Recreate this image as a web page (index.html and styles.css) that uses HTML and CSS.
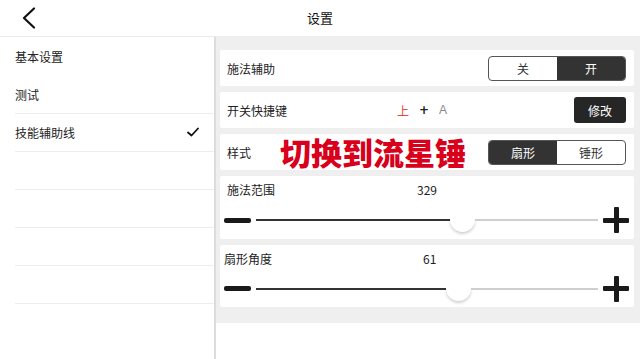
FILE: index.html
```html
<!DOCTYPE html>
<html lang="zh">
<head>
<meta charset="utf-8">
<link rel="stylesheet" href="styles.css">
</head>
<body>
<div class="app">
  <header class="topbar">
    <svg class="back" width="16" height="22" viewBox="0 0 16 22"><polyline points="13,1.5 3,11 13,20.5" fill="none" stroke="#111" stroke-width="2.2" stroke-linecap="round" stroke-linejoin="round"/></svg>
    <div class="title">设置</div>
  </header>
  <main class="main">
    <nav class="sidebar">
      <div class="item first">基本设置</div>
      <div class="item">测试</div>
      <div class="item">技能辅助线<span class="check"><svg width="12" height="10" viewBox="0 0 12 10"><polyline points="1,5.5 4.5,8.5 11,1.5" fill="none" stroke="#111" stroke-width="1.8" stroke-linecap="round" stroke-linejoin="round"/></svg></span></div>
      <div class="item"></div>
      <div class="item"></div>
      <div class="item"></div>
      <div class="item"></div>
    </nav>
    <section class="content">
      <div class="panel">
        <div class="card row">
          <span class="label">施法辅助</span>
          <div class="seg">
            <span class="seg-btn">关</span>
            <span class="seg-btn on">开</span>
          </div>
        </div>
        <div class="card row">
          <span class="label">开关快捷键</span>
          <span class="hotkey"><span class="hk-key">上</span><span class="hk-plus">+</span><span class="hk-a">A</span></span>
          <span class="btn">修改</span>
        </div>
        <div class="card row style-row">
          <span class="label">样式</span>
          <div class="seg">
            <span class="seg-btn on">扇形</span>
            <span class="seg-btn">锤形</span>
          </div>
          <span class="overlay">切换到流星锤</span>
        </div>
        <div class="card slider-card">
          <div class="s-head">
            <span class="s-label">施法范围</span>
            <span class="s-value">329</span>
          </div>
          <div class="s-row">
            <span class="minus"></span>
            <div class="track">
              <span class="fill" style="width:60.2%"></span>
              <span class="thumb" style="left:60.2%"></span>
            </div>
            <span class="plus"></span>
          </div>
        </div>
        <div class="card slider-card alt">
          <div class="s-head">
            <span class="s-label">扇形角度</span>
            <span class="s-value">61</span>
          </div>
          <div class="s-row">
            <span class="minus"></span>
            <div class="track">
              <span class="fill" style="width:59%"></span>
              <span class="thumb" style="left:59%"></span>
            </div>
            <span class="plus"></span>
          </div>
        </div>
      </div>
    </section>
  </main>
</div>
</body>
</html>
```

FILE: styles.css
```css
* { box-sizing: border-box; }
html, body { margin: 0; padding: 0; background: #fff; }
body {
  width: 640px;
  height: 359px;
  overflow: hidden;
  font-family: "Noto Sans CJK SC", "Noto Sans", sans-serif;
  font-size: 12px;
  color: #222;
}
.app { display: flex; flex-direction: column; height: 359px; }
.topbar {
  height: 37px;
  border-bottom: 1px solid #ebebeb;
  position: relative;
  display: flex;
  align-items: center;
  justify-content: center;
}
.back { position: absolute; left: 21px; top: 7px; }
.title { font-size: 13px; color: #111; margin-top: -1px; }
.main { flex: 1; display: flex; }
.sidebar {
  width: 216px;
  border-right: 2px solid #dcdcdc;
  display: flex;
  flex-direction: column;
}
.item {
  height: 38px;
  margin-left: 15px;
  border-bottom: 1px solid #ededed;
  display: flex;
  align-items: center;
  justify-content: space-between;
  padding-right: 15px;
  flex-shrink: 0;
}
.item.first { border-bottom: none; height: 39px; }
.check { display: flex; margin-top: -1px; }
.content { flex: 1; }
.panel {
  background: #efefef;
  padding: 13px 6px 16px 4px;
  display: flex;
  flex-direction: column;
  gap: 6px;
}
.card { background: #fff; border-radius: 2px; }
.row {
  height: 36px;
  display: flex;
  align-items: center;
  padding: 0 8px 0 7px;
  position: relative;
}
.label { flex: 1; }
.seg {
  width: 138px;
  height: 25px;
  border: 1px solid #555;
  border-radius: 4px;
  display: flex;
  overflow: hidden;
}
.seg-btn {
  flex: 1;
  display: flex;
  align-items: center;
  justify-content: center;
  color: #333;
  font-size: 12px;
}
.seg-btn.on { background: #333; color: #fff; }
.hotkey { display: flex; align-items: center; margin-right: 127px; }
.hk-key { color: #e8483a; }
.hk-plus { font-weight: bold; color: #222; margin: 0 10px 0 10px; font-family: "DejaVu Sans", sans-serif; }
.hk-a { color: #888; font-family: "Liberation Sans", sans-serif; }
.btn {
  width: 52px;
  height: 26px;
  background: #262626;
  color: #fff;
  border-radius: 3px;
  display: flex;
  align-items: center;
  justify-content: center;
}
.overlay {
  position: absolute;
  left: 60px;
  top: -2px;
  font-size: 31px;
  font-weight: 900;
  color: #d8001a;
  letter-spacing: 0;
  line-height: 40px;
  white-space: nowrap;
}
.slider-card { height: 63px; padding: 0 5px 0 4px; display: flex; flex-direction: column; }
.slider-card.alt { height: 62px; }
.s-head { height: 26px; display: flex; align-items: center; padding-left: 3px; }
.slider-card.alt .s-head { padding-left: 0; }
.s-label { width: 190px; }
.slider-card.alt .s-label { width: 199px; }
.s-row { flex: 1; display: flex; align-items: center; gap: 5px; margin-top: -1px; }
.minus { width: 27px; height: 5px; background: #1a1a1a; border-radius: 2px; }
.plus { width: 26px; height: 26px; position: relative; }
.plus::before, .plus::after {
  content: ""; position: absolute; background: #1a1a1a; border-radius: 1px;
}
.plus::before { left: 0; right: 0; top: 10.5px; height: 5px; }
.plus::after { top: 0; bottom: 0; left: 10.5px; width: 5px; }
.track { flex: 1; height: 2px; background: #cfcfcf; position: relative; }
.fill { position: absolute; left: 0; top: 0; height: 2px; background: #333; }
.thumb {
  position: absolute;
  top: 0;
  width: 25px;
  height: 13px;
  margin-left: -12px;
  background: #fff;
  border-radius: 0 0 13px 13px;
  box-shadow: 0 2px 3px rgba(0,0,0,0.18);
}
```
